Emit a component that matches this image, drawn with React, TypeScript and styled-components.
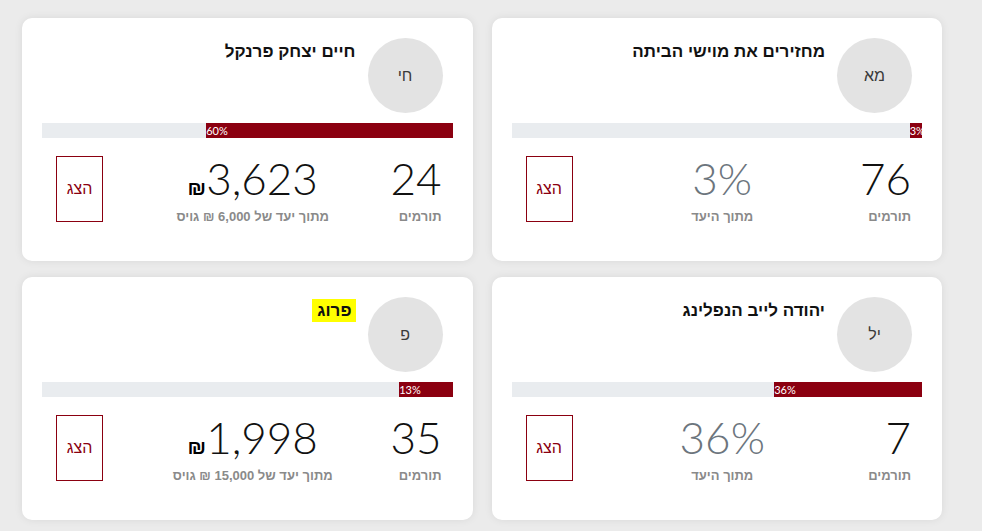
import styled, { createGlobalStyle } from "styled-components";

const GlobalStyle = createGlobalStyle`
  html, body {
    margin: 0;
    padding: 0;
    background: #ebebeb;
  }
  body {
    font-family: "Liberation Sans", "DejaVu Sans", Arial, sans-serif;
  }
`;

const Page = styled.div`
  padding: 18px 40px 11px 22px;
`;

const CardGrid = styled.div`
  direction: rtl;
  display: grid;
  grid-template-columns: 1fr 1fr;
  column-gap: 19px;
  row-gap: 16px;
`;

const Card = styled.div`
  background: #ffffff;
  border-radius: 10px;
  box-shadow: 0 0 8px rgba(0, 0, 0, 0.08);
  padding: 20px 20px 35px;
  display: flex;
  flex-direction: column;
`;

const Header = styled.div`
  display: flex;
  align-items: flex-start;
  gap: 12px;
  padding-right: 10px;
`;

const Avatar = styled.div`
  width: 75px;
  height: 75px;
  border-radius: 50%;
  background: #e3e3e3;
  color: #3a3a3a;
  font-size: 16px;
  display: flex;
  align-items: center;
  justify-content: center;
  flex-shrink: 0;
`;

const Title = styled.h3`
  margin: 2px 0 0;
  font-size: 17px;
  line-height: 24px;
  font-weight: 700;
  color: #111;
`;

const Marker = styled.span`
  background: #ffff00;
  padding: 2px 4px 2px 5px;
`;

const Bar = styled.div`
  margin-top: 10px;
  height: 15px;
  background: #e9ecef;
  display: flex;
`;

const Fill = styled.div`
  height: 100%;
  background: #8b0010;
  overflow: hidden;
  direction: ltr;
  text-align: left;
  color: #fff;
  font-family: "Lato", "Liberation Sans", sans-serif;
  font-size: 11px;
  line-height: 15px;
  white-space: nowrap;
`;

const Stats = styled.div`
  margin-top: 18px;
  padding: 0 11px 0 14px;
  display: grid;
  grid-template-columns: 79px 1fr 87px;
  align-items: start;
`;

const StatCol = styled.div<{ $align: "start" | "center" }>`
  display: flex;
  flex-direction: column;
  align-items: ${({ $align }) => ($align === "center" ? "center" : "flex-start")};
  text-align: ${({ $align }) => ($align === "center" ? "center" : "right")};
`;

const BigNumber = styled.div<{ $muted?: boolean }>`
  direction: ltr;
  height: 44px;
  font-family: "Lato", "Inter", sans-serif;
  font-weight: 300;
  font-size: 44px;
  line-height: 44px;
  color: ${({ $muted }) => ($muted ? "#6c757d" : "#111")};
  white-space: nowrap;
`;

const Shekel = styled.span`
  font-family: "Liberation Sans", "DejaVu Sans", sans-serif;
  font-weight: 700;
  font-size: 21px;
  line-height: 1;
  color: #000;
`;

const StatLabel = styled.div`
  margin-top: 8px;
  font-size: 13px;
  line-height: 18px;
  font-weight: 700;
  color: #8a8a8a;
  white-space: nowrap;
`;

const ShowButton = styled.button`
  justify-self: end;
  width: 47px;
  height: 66px;
  border: 1px solid #8b0010;
  background: #fff;
  color: #8b0010;
  font-family: "Liberation Sans", "DejaVu Sans", sans-serif;
  font-size: 16px;
  padding: 0;
  cursor: pointer;
`;

interface Campaign {
  initials: string;
  title: string;
  highlight?: boolean;
  percent: number;
  donors: number;
  raised?: string;
  goal?: string;
}

const campaigns: Campaign[] = [
  { initials: "מא", title: "מחזירים את מוישי הביתה", percent: 3, donors: 76 },
  {
    initials: "חי",
    title: "חיים יצחק פרנקל",
    percent: 60,
    donors: 24,
    raised: "3,623",
    goal: "6,000",
  },
  { initials: "יל", title: "יהודה לייב הנפלינג", percent: 36, donors: 7 },
  {
    initials: "פ",
    title: "פרוג",
    highlight: true,
    percent: 13,
    donors: 35,
    raised: "1,998",
    goal: "15,000",
  },
];

const CampaignCard = ({ c }: { c: Campaign }) => (
  <Card>
    <Header>
      <Avatar>{c.initials}</Avatar>
      <Title>{c.highlight ? <Marker>{c.title}</Marker> : c.title}</Title>
    </Header>

    <Bar>
      <Fill style={{ width: `${c.percent}%` }}>{c.percent}%</Fill>
    </Bar>

    <Stats>
      <StatCol $align="start">
        <BigNumber>{c.donors}</BigNumber>
        <StatLabel>תורמים</StatLabel>
      </StatCol>
      <StatCol $align="center">
        {c.raised ? (
          <BigNumber>
            <Shekel>₪</Shekel>
            {c.raised}
          </BigNumber>
        ) : (
          <BigNumber $muted>{c.percent}%</BigNumber>
        )}
        <StatLabel>
          {c.goal ? `מתוך יעד של ${c.goal} ₪ גויס` : "מתוך היעד"}
        </StatLabel>
      </StatCol>
      <ShowButton>הצג</ShowButton>
    </Stats>
  </Card>
);

export default function App() {
  return (
    <>
      <GlobalStyle />
      <Page>
        <CardGrid>
          {campaigns.map((c) => (
            <CampaignCard key={c.title} c={c} />
          ))}
        </CardGrid>
      </Page>
    </>
  );
}
